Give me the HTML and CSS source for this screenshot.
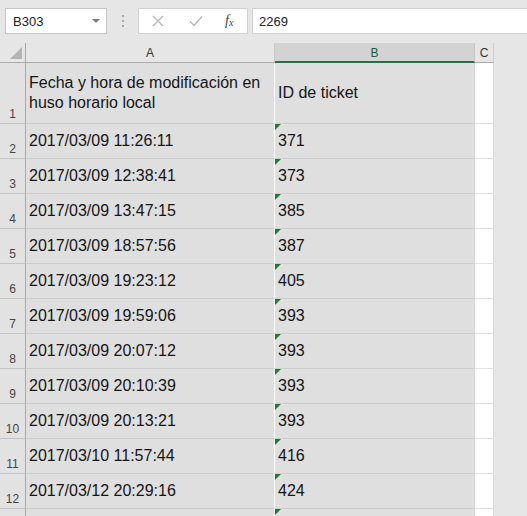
FILE: index.html
```html
<!DOCTYPE html>
<html>
<head>
<meta charset="utf-8">
<link rel="stylesheet" href="styles.css">
</head>
<body>
<div class="toolbar">
  <div class="namebox">
    <span class="name">B303</span>
    <span class="dd"></span>
  </div>
  <div class="dots"><i></i><i></i><i></i></div>
  <div class="fbtns">
    <svg class="ic" width="12" height="12" viewBox="0 0 12 12"><path d="M1 1L11 11M11 1L1 11" stroke="#b9b9b9" stroke-width="1.4" fill="none"/></svg>
    <svg class="ic" width="14" height="12" viewBox="0 0 14 12"><path d="M1 6.5L5 10.5L13 1.5" stroke="#b9b9b9" stroke-width="1.5" fill="none"/></svg>
    <span class="fx">f<sub>x</sub></span>
  </div>
  <div class="finput">2269</div>
</div>
<div class="sheet">
  <div class="corner"><span class="tri"></span></div>
  <div class="ch">A</div>
  <div class="ch sel">B</div>
  <div class="ch c">C</div>
  <div class="rest"></div>

  <div class="rh">1</div>
  <div class="cell a wrap">Fecha y hora de modificación en huso horario local</div>
  <div class="cell b">ID de ticket</div>
  <div class="cell w"></div>
  <div class="rest"></div>

  <div class="rh">2</div><div class="cell a">2017/03/09 11:26:11</div><div class="cell b t">371</div><div class="cell w"></div><div class="rest"></div>
  <div class="rh">3</div><div class="cell a">2017/03/09 12:38:41</div><div class="cell b t">373</div><div class="cell w"></div><div class="rest"></div>
  <div class="rh">4</div><div class="cell a">2017/03/09 13:47:15</div><div class="cell b t">385</div><div class="cell w"></div><div class="rest"></div>
  <div class="rh">5</div><div class="cell a">2017/03/09 18:57:56</div><div class="cell b t">387</div><div class="cell w"></div><div class="rest"></div>
  <div class="rh">6</div><div class="cell a">2017/03/09 19:23:12</div><div class="cell b t">405</div><div class="cell w"></div><div class="rest"></div>
  <div class="rh">7</div><div class="cell a">2017/03/09 19:59:06</div><div class="cell b t">393</div><div class="cell w"></div><div class="rest"></div>
  <div class="rh">8</div><div class="cell a">2017/03/09 20:07:12</div><div class="cell b t">393</div><div class="cell w"></div><div class="rest"></div>
  <div class="rh">9</div><div class="cell a">2017/03/09 20:10:39</div><div class="cell b t">393</div><div class="cell w"></div><div class="rest"></div>
  <div class="rh">10</div><div class="cell a">2017/03/09 20:13:21</div><div class="cell b t">393</div><div class="cell w"></div><div class="rest"></div>
  <div class="rh">11</div><div class="cell a">2017/03/10 11:57:44</div><div class="cell b t">416</div><div class="cell w"></div><div class="rest"></div>
  <div class="rh">12</div><div class="cell a">2017/03/12 20:29:16</div><div class="cell b t">424</div><div class="cell w"></div><div class="rest"></div>
  <div class="rh"></div><div class="cell a"></div><div class="cell b t"></div><div class="cell w"></div><div class="rest"></div>
</div>
</body>
</html>
```
FILE: styles.css
```css
* { box-sizing: border-box; }
html, body { margin: 0; padding: 0; }
body {
  width: 527px;
  height: 516px;
  overflow: hidden;
  background: #e6e6e6;
  font-family: "Liberation Sans", Arial, sans-serif;
  color: #1a1a1a;
}
.toolbar {
  height: 43px;
  display: flex;
  align-items: flex-start;
  padding: 8px 0 0 5px;
}
.namebox {
  width: 102px;
  height: 26px;
  background: #fff;
  border: 1px solid #c6c6c6;
  display: flex;
  align-items: center;
  justify-content: space-between;
  padding: 0 6px 0 7px;
  font-size: 13px;
  color: #222;
}
.dd {
  width: 0; height: 0;
  border-left: 4px solid transparent;
  border-right: 4px solid transparent;
  border-top: 4px solid #7a7a7a;
}
.dots {
  width: 31px;
  height: 26px;
  display: flex;
  flex-direction: column;
  align-items: center;
  justify-content: center;
  gap: 3px;
}
.dots i {
  display: block;
  width: 2px; height: 2px;
  background: #a8a8a8;
}
.fbtns {
  width: 110px;
  height: 26px;
  background: #fff;
  border: 1px solid #d2d2d2;
  display: flex;
  align-items: center;
  padding: 0 0 0 13px;
  gap: 0;
}
.fbtns .ic:first-child { margin-right: 25px; }
.fbtns .ic:nth-child(2) { margin-right: 22px; }
.fx {
  font-family: "Liberation Serif", "Times New Roman", serif;
  font-style: italic;
  font-size: 14px;
  color: #444;
  line-height: 1;
}
.fx sub { font-size: 10px; vertical-align: -1px; }
.finput {
  margin-left: 4px;
  flex: 1;
  height: 26px;
  background: #fff;
  border: 1px solid #d2d2d2;
  border-right: none;
  display: flex;
  align-items: center;
  padding-left: 6px;
  font-size: 13px;
  color: #222;
}
.sheet {
  display: grid;
  grid-template-columns: 26px 249px 200px 19px 1fr;
  grid-template-rows: 20px 61px;
  grid-auto-rows: 35px;
}
.corner {
  background: #e6e6e6;
  border-right: 1px solid #a8a8a8;
  border-bottom: 1px solid #ababab;
  position: relative;
}
.tri {
  position: absolute;
  right: 3px;
  bottom: 3px;
  width: 0; height: 0;
  border-left: 12px solid transparent;
  border-bottom: 12px solid #b4b4b4;
}
.ch {
  background: #e6e6e6;
  border-right: 1px solid #c8c8c8;
  border-bottom: 1px solid #ababab;
  display: flex;
  align-items: center;
  justify-content: center;
  font-size: 12px;
  color: #333;
  padding-top: 1px;
}
.ch.sel {
  background: #d3d3d3;
  border-bottom: 2px solid #217346;
  color: #1f5c38;
}
.ch.c { border-right: 1px solid #cfcfcf; }
.rest { background: #e6e6e6; }
.rh {
  background: #e2e2e2;
  border-right: 1px solid #a8a8a8;
  border-bottom: 1px solid #c4c4c4;
  display: flex;
  align-items: flex-end;
  justify-content: center;
  font-size: 12px;
  color: #444;
  padding-bottom: 2px;
}
.cell {
  background: #dfdfdf;
  border-bottom: 1px solid #cdcdcd;
  display: flex;
  align-items: center;
  padding-left: 3px;
  font-size: 16px;
  line-height: 20px;
  color: #151515;
  position: relative;
}
.cell.a { border-right: 1px solid #ffffff; }
.cell.b { border-right: 1px solid #d6d6d6; padding-left: 3px; }
.cell.w { background: #ffffff; border-bottom: 1px solid #e2e2e2; border-right: 1px solid #dadada; }
.cell.wrap { padding-right: 6px; }
.cell.t::before {
  content: "";
  position: absolute;
  left: 0;
  top: 0;
  width: 0; height: 0;
  border-top: 6px solid #1d7a32;
  border-right: 6px solid transparent;
}
```
